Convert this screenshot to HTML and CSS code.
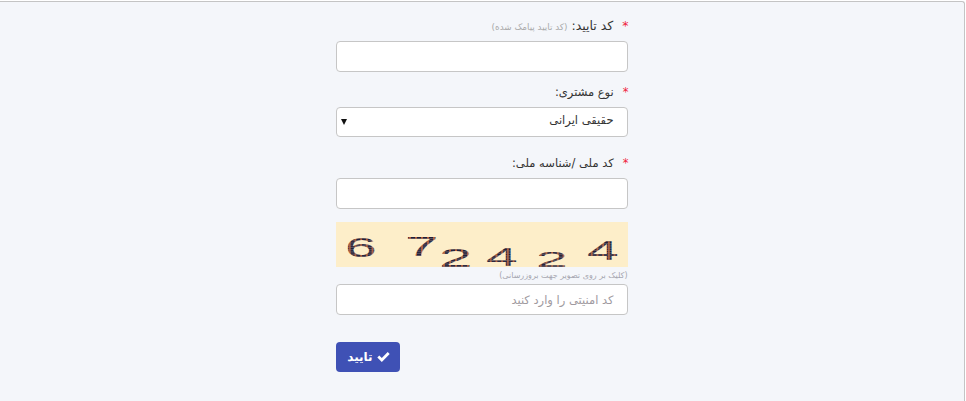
FILE: index.html
```html
<!DOCTYPE html>
<html lang="fa" dir="rtl">
<head>
  <meta charset="UTF-8" />
  <title>تایید</title>
  <link rel="stylesheet" href="styles.css">
</head>
<body>
  <div class="panel">
    <form class="form-box">
      <div class="field field-code">
        <label class="label"><span class="star">*</span>کد تایید: <small class="note">(کد تایید پیامک شده)</small></label>
        <input class="input" type="text">
      </div>
      <div class="field field-type">
        <label class="label"><span class="star">*</span>نوع مشتری:</label>
        <div class="select-wrap">
          <select class="input select">
            <option>حقیقی ایرانی</option>
          </select>
          <span class="select-arrow"></span>
        </div>
      </div>
      <div class="field field-national">
        <label class="label"><span class="star">*</span>کد ملی /شناسه ملی:</label>
        <input class="input" type="text">
      </div>
      <div class="captcha">
        <svg class="captcha-img" width="292" height="45" viewBox="0 0 292 45">
          <defs>
            <pattern id="dots" width="3" height="2" patternUnits="userSpaceOnUse">
              <rect width="3" height="2" fill="#1c1c3a"/>
              <rect x="2" width="1" height="2" fill="#b5562e"/>
              <rect y="1" width="3" height="0.6" fill="#8a7a78"/>
            </pattern>
          </defs>
          <rect width="292" height="45" fill="#fdeec9"/>
          <g class="digits" fill="url(#dots)">
            <text transform="translate(9 35) scale(1.9 0.9)">6</text>
            <text transform="translate(69 34) scale(2 0.95)">7</text>
            <text transform="translate(103 45) scale(2 0.85)">2</text>
            <text transform="translate(150 44) scale(1.9 0.85)">4</text>
            <text transform="translate(200 45) scale(1.9 0.75)">2</text>
            <text transform="translate(251 38) scale(1.9 0.9)">4</text>
          </g>
        </svg>
        <div class="captcha-hint">(کلیک بر روی تصویر جهت بروزرسانی)</div>
        <input class="input" type="text" placeholder="کد امنیتی را وارد کنید">
      </div>
      <div class="actions">
        <button class="btn-submit" type="button">
          <svg class="check" width="13" height="11" viewBox="0 0 13 11"><path d="M1.3 5.6 L4.8 9 L11.7 2" fill="none" stroke="#fff" stroke-width="2.8"/></svg>
          تایید
        </button>
      </div>
    </form>
  </div>
</body>
</html>
```

FILE: styles.css
```css
* {
  box-sizing: border-box;
}

html, body {
  height: 100%;
}

body {
  margin: 0;
  padding-top: 1px;
  background: #fff;
  font-family: "DejaVu Sans", sans-serif;
  overflow: hidden;
}

.panel {
  height: 420px;
  margin-right: 1px;
  background: #f4f6fa;
  border: 1px solid #c4c4c4;
  border-bottom: none;
  border-left: none;
  border-radius: 0 3px 0 0;
  padding-top: 14px;
}

.form-box {
  width: 292px;
  margin-right: 336.5px;
}

.label {
  display: block;
  height: 20px;
  font-size: 11.5px;
  line-height: 20px;
  color: #333;
  margin-bottom: 5px;
  white-space: nowrap;
}

.field-code .label {
  font-size: 12.5px;
}

.star {
  color: #f0233a;
  margin-left: 9px;
  margin-right: -1px;
}

.note {
  font-size: 8.8px;
  color: #aaa;
}

.input {
  display: block;
  width: 292px;
  height: 31px;
  padding: 0 13px;
  background: #fff;
  border: 1px solid #c6c6c6;
  border-radius: 4px;
  font-family: "DejaVu Sans", sans-serif;
  font-size: 11.5px;
  color: #333;
}

.input::placeholder {
  color: #a09aa0;
}

.select-wrap {
  position: relative;
}

.select {
  height: 30px;
  appearance: none;
  padding-bottom: 5px;
}

.select-arrow {
  position: absolute;
  left: 5px;
  top: 12px;
  border-top: 6px solid #111;
  border-left: 3px solid transparent;
  border-right: 3px solid transparent;
}

.field-type {
  margin-top: 10px;
}

.field-national {
  margin-top: 16px;
}

.captcha {
  margin-top: 13px;
}

.captcha-img {
  display: block;
  overflow: visible;
}

.digits text {
  font-family: "Liberation Sans", sans-serif;
  font-size: 30px;
  direction: ltr;
}

.captcha-hint {
  font-size: 8px;
  line-height: 17px;
  color: #a6a6b0;
  white-space: nowrap;
}

.actions {
  margin-top: 27px;
  text-align: left;
}

.btn-submit {
  width: 64px;
  height: 30px;
  padding: 0 0 0 2px;
  background: #3f51b5;
  border: none;
  border-radius: 4px;
  color: #fff;
  font-family: "DejaVu Sans", sans-serif;
  font-size: 12px;
  font-weight: bold;
}

.check {
  vertical-align: -1px;
}
```
